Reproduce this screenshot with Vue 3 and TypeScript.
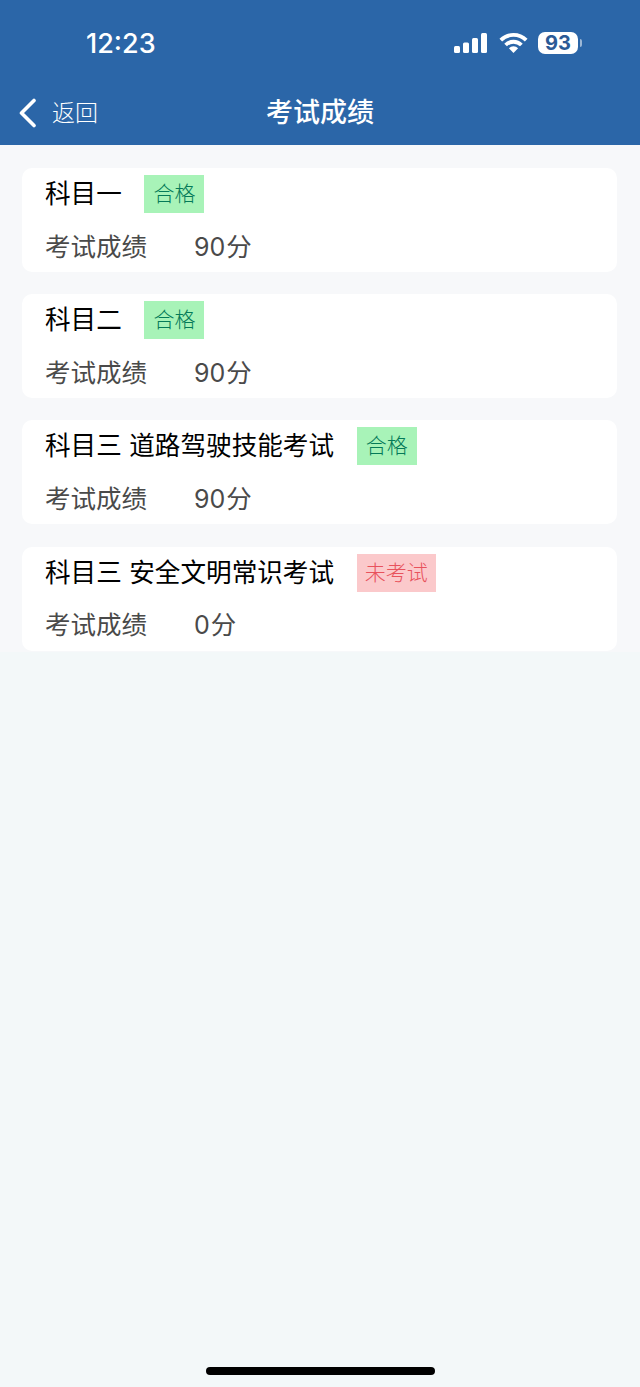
<script setup lang="ts">
interface Exam {
  name: string;
  status: string;
  passed: boolean;
  score: number;
}

const exams: Exam[] = [
  { name: '科目一', status: '合格', passed: true, score: 90 },
  { name: '科目二', status: '合格', passed: true, score: 90 },
  { name: '科目三 道路驾驶技能考试', status: '合格', passed: true, score: 90 },
  { name: '科目三 安全文明常识考试', status: '未考试', passed: false, score: 0 },
];
</script>

<template>
  <div class="page">
    <header class="header">
      <div class="status-bar">
        <span class="time">12:23</span>
        <div class="status-icons">
          <svg class="signal" width="34" height="22" viewBox="0 0 34 22" fill="#fff">
            <rect x="0" y="14" width="6" height="7" rx="1.5" />
            <rect x="9" y="10.5" width="6" height="10.5" rx="1.5" />
            <rect x="18" y="6" width="6" height="15" rx="1.5" />
            <rect x="27" y="1" width="6" height="20" rx="1.5" />
          </svg>
          <svg class="wifi" width="29" height="22" viewBox="0 0 29 22" fill="none" stroke="#fff" stroke-width="3.8">
            <path d="M1.8 8.2a18 18 0 0 1 25.4 0" />
            <path d="M6.6 13a11.2 11.2 0 0 1 15.8 0" />
            <path d="M14.5 21l-4.6-4.8a6.5 6.5 0 0 1 9.2 0z" fill="#fff" stroke="none" />
          </svg>
          <div class="battery">
            <span class="battery-body">93</span>
            <span class="battery-cap"></span>
          </div>
        </div>
      </div>
      <nav class="nav">
        <div class="back">
          <svg width="20" height="30" viewBox="0 0 20 30" fill="none" stroke="#fff" stroke-width="3.6" stroke-linecap="round" stroke-linejoin="round">
            <path d="M16 2.5L3.5 15L16 27.5" />
          </svg>
          <span class="back-text">返回</span>
        </div>
        <h1 class="title">考试成绩</h1>
      </nav>
    </header>

    <main class="list">
      <section v-for="exam in exams" :key="exam.name" class="card">
        <div class="card-head">
          <span class="name">{{ exam.name }}</span>
          <span class="tag" :class="{ failed: !exam.passed }">{{ exam.status }}</span>
        </div>
        <div class="card-row">
          <span class="label">考试成绩</span>
          <span class="score">{{ exam.score }}<span class="unit">分</span></span>
        </div>
      </section>
    </main>

    <div class="home-indicator"></div>
  </div>
</template>

<style>
html,
body {
  margin: 0;
  background: #f3f8f9;
}
</style>

<style scoped>
.page {
  position: relative;
  width: 640px;
  height: 1387px;
  overflow: hidden;
  background: #f3f8f9;
  font-family: Inter, "Noto Sans CJK SC", sans-serif;
}

.header {
  height: 145px;
  box-sizing: border-box;
  background: #2b66a8;
  color: #fff;
}

.status-bar {
  display: flex;
  align-items: center;
  justify-content: space-between;
  height: 86px;
  padding: 0 58px 0 86px;
}

.time {
  padding-top: 2px;
  font-size: 27px;
  font-weight: 500;
  line-height: 84px;
}

.status-icons {
  display: flex;
  align-items: center;
  gap: 10px;
}

.signal {
  margin-top: -1px;
  margin-right: 1px;
}

.battery {
  display: flex;
  align-items: center;
  gap: 2px;
}

.battery-body {
  width: 40px;
  height: 22px;
  border-radius: 7px;
  background: #fff;
  color: #2b5a96;
  font-size: 20px;
  font-weight: 700;
  line-height: 22px;
  text-align: center;
}

.battery-cap {
  width: 2px;
  height: 8px;
  border-radius: 0 2px 2px 0;
  background: #9db8d6;
}

.nav {
  position: relative;
  display: flex;
  align-items: center;
  justify-content: center;
  height: 54px;
}

.back {
  position: absolute;
  left: 18px;
  top: 50%;
  transform: translateY(-50%);
  display: flex;
  align-items: center;
  gap: 14px;
  font-size: 23px;
  font-weight: 300;
}

.back-text {
  margin-top: -4px;
}

.title {
  margin: 0;
  font-size: 27px;
  font-weight: 500;
  line-height: 54px;
}

.list {
  display: flex;
  flex-direction: column;
  gap: 22.2px;
  padding: 23px 23px 1.4px 22px;
  background: #f7f8fa;
}

.card {
  height: 104px;
  box-sizing: border-box;
  padding: 7px 23px 0;
  border-radius: 10px;
  background: #fff;
}

.card-head {
  display: flex;
  align-items: center;
  height: 38px;
  gap: 22.7px;
}

.name {
  color: #000;
  font-size: 25.6px;
  line-height: 38px;
  word-spacing: 0.3px;
}

.tag {
  height: 38px;
  padding: 0 9px;
  background: #a8f3b8;
  color: #047a58;
  font-size: 21px;
  font-weight: 300;
  line-height: 37px;
}

.tag.failed {
  padding: 0 8px;
  background: #fbc9cb;
  color: #e8525c;
}

.card-row {
  display: flex;
  align-items: center;
  height: 38px;
  margin-top: 12px;
  color: #4a4a4a;
  font-size: 25.5px;
}

.label {
  width: 149px;
}

.score {
  font-size: 25px;
}

.unit {
  margin-left: 1px;
  font-size: 25.5px;
}

.home-indicator {
  position: absolute;
  left: 206px;
  bottom: 12px;
  width: 229px;
  height: 8px;
  border-radius: 4px;
  background: #000;
}
</style>
